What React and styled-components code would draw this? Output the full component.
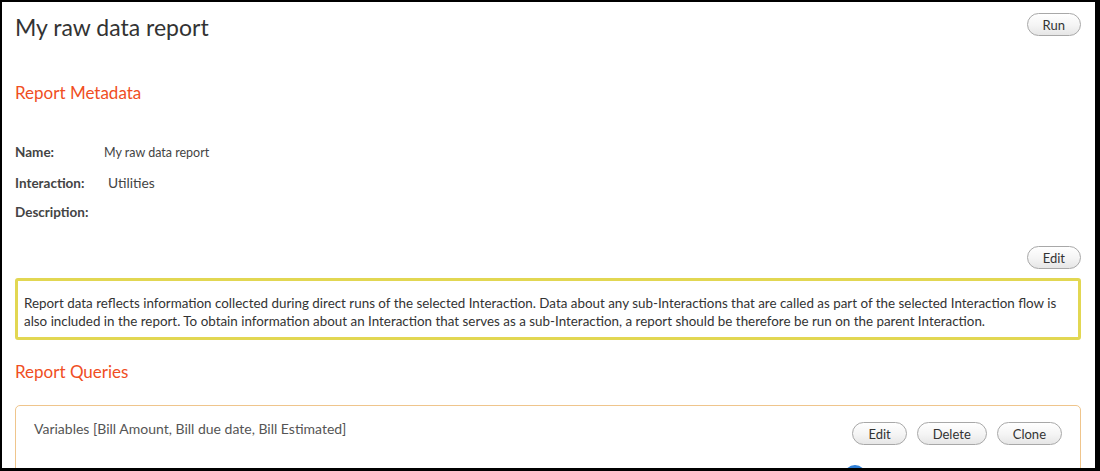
import React from "react";
import styled, { createGlobalStyle } from "styled-components";

const GlobalStyle = createGlobalStyle`
  html, body {
    margin: 0;
    padding: 0;
    background: #fff;
  }
  body {
    font-family: "Lato", "Open Sans", sans-serif;
    color: #333;
  }
`;

const Frame = styled.div`
  box-sizing: border-box;
  width: 1100px;
  height: 471px;
  overflow: hidden;
  border-style: solid;
  border-color: #000;
  border-width: 2px 5px 3px 2px;
  background: #fff;
  padding: 0 14px 0 13px;
`;

const Header = styled.div`
  display: flex;
  justify-content: space-between;
  align-items: flex-start;
  padding-top: 11px;
`;

const Title = styled.h1`
  margin: 0;
  font-size: 23px;
  font-weight: 400;
  color: #333;
  line-height: 28px;
`;

const Button = styled.button`
  box-sizing: border-box;
  height: 23px;
  padding: 0 15px;
  border: 1px solid #a8a8a8;
  border-radius: 12px;
  background: linear-gradient(#ffffff, #f4f4f4 55%, #e6e6e6);
  font-family: inherit;
  font-size: 13px;
  color: #333;
  cursor: pointer;
`;

const SectionTitle = styled.h2`
  margin: ${(p) => p.m || "0"};
  font-size: 17px;
  font-weight: 400;
  color: #f04e23;
  line-height: 22px;
`;

const Meta = styled.div`
  margin: 40px 0 0;
  display: flex;
  flex-direction: column;
  gap: 10px;
`;

const MetaRow = styled.div`
  display: flex;
  align-items: baseline;
  height: 20px;
`;

const Label = styled.span`
  width: ${(p) => p.w}px;
  font-size: 13.5px;
  font-weight: 700;
  color: #444;
`;

const Value = styled.span`
  font-size: ${(p) => p.size || 13.8}px;
  color: #444;
`;

const RightRow = styled.div`
  display: flex;
  justify-content: flex-end;
  gap: 10px;
  margin-top: ${(p) => p.mt || 0}px;
`;

const Notice = styled.div`
  margin-top: 9px;
  border: 3px solid #e2d752;
  border-radius: 3px;
  padding: 13px 6px 7px;
  font-size: 13.4px;
  line-height: 18px;
  color: #333;
`;

const Card = styled.div`
  position: relative;
  margin-top: 22px;
  height: 80px;
  border: 1px solid #efc58c;
  border-radius: 5px;
  padding: 16px 18px 0;
  display: flex;
  justify-content: space-between;
  align-items: flex-start;
  overflow: hidden;
`;

const CardText = styled.div`
  margin-top: -2px;
  font-size: 14px;
  color: #555;
`;

const Dot = styled.span`
  position: absolute;
  left: 828px;
  top: 59px;
  width: 22px;
  height: 22px;
  border-radius: 50%;
  background: #2f7fd6;
`;

export default function App() {
  return (
    <>
      <GlobalStyle />
      <Frame>
        <Header>
          <Title>My raw data report</Title>
          <Button>Run</Button>
        </Header>
        <SectionTitle m="41px 0 0">Report Metadata</SectionTitle>
        <Meta>
          <MetaRow>
            <Label w={89}>Name:</Label>
            <Value size={12.5}>My raw data report</Value>
          </MetaRow>
          <MetaRow>
            <Label w={93}>Interaction:</Label>
            <Value>Utilities</Value>
          </MetaRow>
          <MetaRow>
            <Label w={93}>Description:</Label>
            <Value></Value>
          </MetaRow>
        </Meta>
        <RightRow mt={22}>
          <Button>Edit</Button>
        </RightRow>
        <Notice>
          Report data reflects information collected during direct runs of the selected Interaction. Data about any
          sub-Interactions that are called as part of the selected Interaction flow is also included in the report. To
          obtain information about an Interaction that serves as a sub-Interaction, a report should be therefore be run
          on the parent Interaction.
        </Notice>
        <SectionTitle m="21px 0 0">Report Queries</SectionTitle>
        <Card>
          <CardText>Variables [Bill Amount, Bill due date, Bill Estimated]</CardText>
          <RightRow>
            <Button>Edit</Button>
            <Button>Delete</Button>
            <Button>Clone</Button>
          </RightRow>
          <Dot />
        </Card>
      </Frame>
    </>
  );
}
